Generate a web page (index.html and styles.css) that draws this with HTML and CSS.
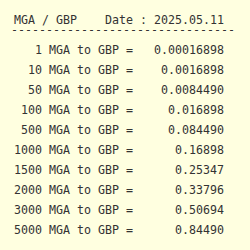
FILE: index.html
```html
<!DOCTYPE html>
<html>
<head>
<meta charset="utf-8">
<link rel="stylesheet" href="styles.css">
</head>
<body>
<div class="sheet">
  <div class="head"><span class="pair">MGA / GBP</span><span class="date">Date : 2025.05.11</span></div>
  <div class="rule">--------------------------------</div>
  <div class="rows">
    <div class="row"><span class="amt">1</span><span class="lbl">MGA to GBP =</span><span class="val">0.00016898</span></div>
    <div class="row"><span class="amt">10</span><span class="lbl">MGA to GBP =</span><span class="val">0.0016898</span></div>
    <div class="row"><span class="amt">50</span><span class="lbl">MGA to GBP =</span><span class="val">0.0084490</span></div>
    <div class="row"><span class="amt">100</span><span class="lbl">MGA to GBP =</span><span class="val">0.016898</span></div>
    <div class="row"><span class="amt">500</span><span class="lbl">MGA to GBP =</span><span class="val">0.084490</span></div>
    <div class="row"><span class="amt">1000</span><span class="lbl">MGA to GBP =</span><span class="val">0.16898</span></div>
    <div class="row"><span class="amt">1500</span><span class="lbl">MGA to GBP =</span><span class="val">0.25347</span></div>
    <div class="row"><span class="amt">2000</span><span class="lbl">MGA to GBP =</span><span class="val">0.33796</span></div>
    <div class="row"><span class="amt">3000</span><span class="lbl">MGA to GBP =</span><span class="val">0.50694</span></div>
    <div class="row"><span class="amt">5000</span><span class="lbl">MGA to GBP =</span><span class="val">0.84490</span></div>
  </div>
</div>
</body>
</html>
```
FILE: styles.css
```css
html, body {
  margin: 0;
  padding: 0;
  background: #ffffe0;
}
.sheet {
  width: 250px;
  height: 250px;
  box-sizing: border-box;
  padding: 13px 0 0 14px;
  font-family: "DejaVu Sans Mono", monospace;
  font-size: 11.63px;
  color: #333;
}
.head {
  display: flex;
  gap: 4ch;
  line-height: 14px;
  height: 14px;
  white-space: pre;
}
.rule {
  margin-left: -3px;
  line-height: 6px;
  height: 6px;
  white-space: pre;
}
.rows {
  margin-top: 7px;
  display: flex;
  flex-direction: column;
}
.row {
  display: grid;
  grid-template-columns: 4ch 13ch 13ch;
  line-height: 20px;
  white-space: pre;
}
.amt { text-align: right; }
.lbl { padding-left: 1ch; }
.val { text-align: right; }
```
